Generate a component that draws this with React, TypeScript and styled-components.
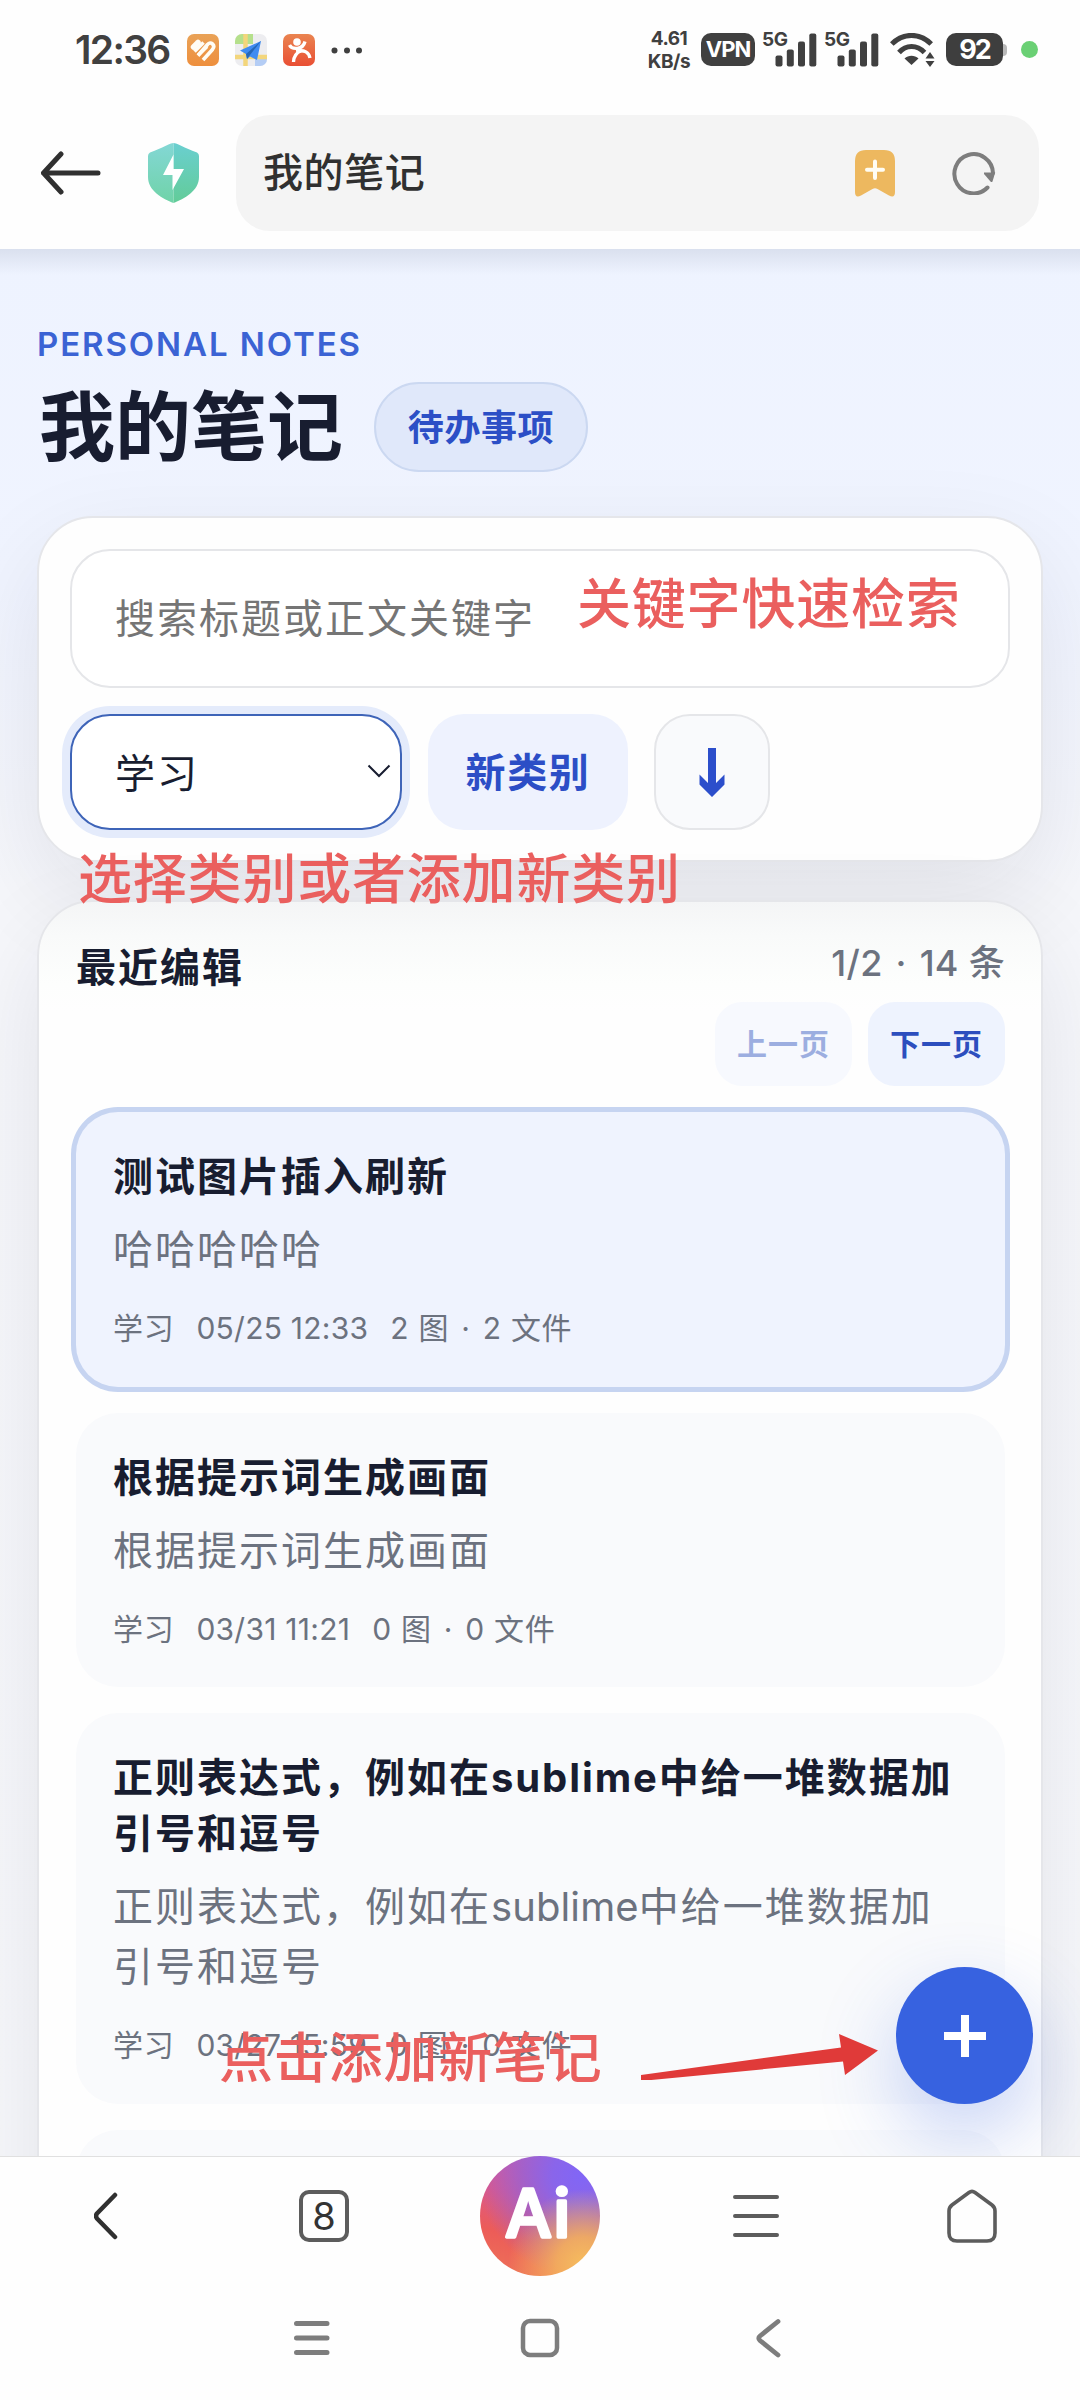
import React from "react";
import styled, { createGlobalStyle, css } from "styled-components";

const sans = `Inter, "Noto Sans CJK SC", sans-serif`;

const GlobalStyle = createGlobalStyle`
  * { box-sizing: border-box; }
  body { margin: 0; background: #fff; font-family: ${sans}; }
  button, input { font-family: inherit; margin: 0; }
  svg { display: block; flex: none; }
`;

const Screen = styled.div`
  position: relative;
  width: 1080px;
  height: 2400px;
  display: flex;
  flex-direction: column;
  overflow: hidden;
  background: #fefefe;
`;

/* ---------- status bar ---------- */

const StatusBar = styled.div`
  height: 99px;
  flex: none;
  display: flex;
  align-items: center;
  padding: 0 42px 0 75px;
  color: #404040;
`;

const Clock = styled.span`
  width: 112px;
  font-size: 39px;
  line-height: 48px;
  font-weight: 600;
  letter-spacing: -1.7px;
  white-space: nowrap;
`;

const AppIcons = styled.div`
  display: flex;
  gap: 16px;
  align-items: center;
`;

const StatusRight = styled.div`
  margin-left: auto;
  display: flex;
  align-items: center;
`;

const NetSpeed = styled.div`
  width: 44px;
  margin-right: 10px;
  text-align: center;
  font-size: 19px;
  line-height: 23px;
  font-weight: 700;
  letter-spacing: -0.5px;
  white-space: nowrap;
`;

const VpnBadge = styled.div`
  width: 54px;
  height: 33px;
  margin-right: 7px;
  border-radius: 10px;
  background: #404040;
  color: #fff;
  font-size: 22px;
  line-height: 33px;
  font-weight: 700;
  letter-spacing: -1px;
  text-align: center;
`;

const Signal = styled.div`
  position: relative;
  width: 55px;
  height: 36px;
  margin-right: 7px;
`;

const SignalLabel = styled.span`
  position: absolute;
  left: 0;
  top: -2px;
  font-size: 19px;
  line-height: 19px;
  font-weight: 700;
  letter-spacing: -0.3px;
`;

const WifiSlot = styled.div`
  margin-left: 4px;
`;

const Battery = styled.div`
  display: flex;
  align-items: center;
  margin-left: 11px;
  &::after {
    content: "";
    width: 4px;
    height: 12px;
    border-radius: 0 4px 4px 0;
    background: #b9b9b9;
  }
`;

const BatteryBody = styled.div`
  width: 57px;
  height: 33px;
  border-radius: 10px;
  background: #3e3e3e;
  color: #fff;
  font-size: 27px;
  line-height: 33px;
  font-weight: 700;
  letter-spacing: -2px;
  text-align: center;
`;

const PrivacyDot = styled.div`
  width: 17px;
  height: 17px;
  margin-left: 14px;
  border-radius: 50%;
  background: #6ad074;
`;

/* ---------- browser toolbar ---------- */

const Toolbar = styled.header`
  height: 150px;
  flex: none;
  display: flex;
  align-items: flex-start;
  padding: 16px 41px 0 40px;
`;

const ToolIcon = styled.div<{ $gap: number }>`
  height: 115px;
  display: flex;
  align-items: center;
  margin-right: ${(p) => p.$gap}px;
`;

const AddressBar = styled.div`
  flex: 1;
  height: 116px;
  display: flex;
  align-items: center;
  padding: 0 43px 0 27px;
  border-radius: 34px;
  background: #f4f4f4;
`;

const AddressText = styled.span`
  flex: 1;
  font-size: 40px;
  line-height: 60px;
  font-weight: 500;
  letter-spacing: 0.6px;
  color: #303030;
`;

/* ---------- notes page ---------- */

const Page = styled.main`
  position: relative;
  flex: none;
  height: 1907px;
  overflow: hidden;
  padding: 75px 37px 0;
  background: linear-gradient(180deg, #eef3ff 0, #f0f4ff 330px, #f6f7fb 640px, #f7f8fb 100%);
  &::before {
    content: "";
    position: absolute;
    inset: 0 0 auto;
    height: 26px;
    background: linear-gradient(180deg, rgba(190, 198, 215, 0.42), rgba(190, 198, 215, 0));
  }
`;

const Eyebrow = styled.div`
  font-size: 33px;
  line-height: 40px;
  font-weight: 600;
  letter-spacing: 1.9px;
  color: #3b63d4;
  white-space: nowrap;
`;

const TitleRow = styled.div`
  display: flex;
  align-items: center;
  gap: 34px;
  height: 90px;
  margin: 18px 0 44px;
`;

const Title = styled.h1`
  margin: 0;
  padding-left: 2px;
  font-size: 76px;
  line-height: 90px;
  font-weight: 700;
  color: #181d30;
  width: 303px;
  white-space: nowrap;
`;

const TodoPill = styled.button`
  height: 90px;
  width: 214px;
  padding: 0 0 5px;
  border: 2px solid #cbd8f1;
  border-radius: 45px;
  background: #e0e8fa;
  color: #2c4fc6;
  font-size: 36px;
  font-weight: 700;
  letter-spacing: 0.6px;
  white-space: nowrap;
`;

const cardBox = css`
  border: 2px solid #e5e6ea;
  border-radius: 56px;
  box-shadow: 0 36px 100px rgba(20, 22, 40, 0.09);
`;

const FilterCard = styled.section`
  ${cardBox}
  height: 346px;
  padding: 31px 31px 30px;
  background: #fefefe;
  display: flex;
  flex-direction: column;
  gap: 26px;
`;

const SearchInput = styled.input`
  height: 139px;
  width: 940px;
  flex: none;
  padding: 0 0 0 43px;
  border: 2px solid #e5e6e9;
  border-radius: 40px;
  background: #fff;
  font-size: 40px;
  letter-spacing: 2px;
  &::placeholder { color: #757575; opacity: 1; }
`;

const FilterRow = styled.div`
  display: flex;
  flex: none;
  height: 116px;
`;

const CategorySelect = styled.div`
  width: 332px;
  padding: 0 9px 3px 43px;
  display: flex;
  align-items: center;
  justify-content: space-between;
  border: 2px solid #3e64b8;
  border-radius: 40px;
  background: #fff;
  box-shadow: 0 0 0 8px #e4ebfb;
  font-size: 40px;
  letter-spacing: 2px;
  color: #181d30;
`;

const NewCategory = styled.button`
  width: 200px;
  margin-left: 26px;
  padding: 0 0 4px;
  border: 0;
  border-radius: 36px;
  background: #eef2fe;
  color: #2c4ec6;
  font-size: 40px;
  font-weight: 700;
  letter-spacing: 1.6px;
`;

const SortButton = styled.button`
  width: 116px;
  margin-left: 26px;
  padding: 0;
  display: flex;
  align-items: center;
  justify-content: center;
  border: 2px solid #e5e6e9;
  border-radius: 36px;
  background: #f9fafc;
`;

const NotesCard = styled.section`
  ${cardBox}
  margin-top: 38px;
  height: 1400px;
  padding: 36px 36px 0 37px;
  background: linear-gradient(180deg, #f4f5f6 0, #f9fafa 34px, #fdfefd 82px, #fefefe 110px);
`;

const ListHead = styled.div`
  display: flex;
  justify-content: space-between;
  height: 174px;
`;

const ListTitle = styled.h2`
  margin: 0;
  font-size: 40px;
  line-height: 60px;
  font-weight: 700;
  letter-spacing: 2px;
  color: #181d30;
`;

const Pager = styled.div`
  display: flex;
  flex-direction: column;
  align-items: flex-end;
`;

const PageInfo = styled.div`
  height: 64px;
  font-size: 36px;
  line-height: 51px;
  font-weight: 500;
  letter-spacing: 0.3px;
  color: #6c727f;
  white-space: nowrap;
`;

const MidDot = styled.span`
  margin: 0 3px;
`;

const PagerButtons = styled.div`
  display: flex;
  gap: 16px;
`;

const PagerButton = styled.button<{ $off?: boolean }>`
  width: 137px;
  height: 84px;
  padding: 0 0 4px;
  border: 0;
  border-radius: 27px;
  background: ${(p) => (p.$off ? "#f7f9fe" : "#eef3fe")};
  color: ${(p) => (p.$off ? "#9caee0" : "#2c4ebe")};
  font-size: 30px;
  font-weight: 700;
  letter-spacing: 1px;
`;

const NoteList = styled.div`
  display: flex;
  flex-direction: column;
  gap: 26px;
`;

const NoteItem = styled.article<{ $active?: boolean }>`
  min-height: 274px;
  padding: 37px 36px 35.7px 37px;
  border-radius: 42px;
  background: ${(p) => (p.$active ? "#eff3fe" : "#f9fafc")};
  box-shadow: ${(p) => (p.$active ? "0 0 0 5px #c6d4f1" : "none")};
`;

const NoteTitle = styled.h3`
  margin: 0;
  font-size: 40px;
  line-height: 56px;
  font-weight: 700;
  letter-spacing: 2px;
  color: #181d30;
`;

const NoteBody = styled.p`
  margin: 15px 0 0;
  font-size: 40px;
  line-height: 60px;
  letter-spacing: 2px;
  color: #6c727f;
`;

const Latin = styled.span<{ $ls: number }>`
  letter-spacing: ${(p) => p.$ls}px;
`;

const NoteMeta = styled.div`
  display: flex;
  gap: 22px;
  height: 45px;
  margin-top: 26px;
  font-size: 30px;
  line-height: 45px;
  letter-spacing: 0.7px;
  color: #6c727f;
  white-space: nowrap;
`;

const MetaTime = styled.span`
  letter-spacing: 0.25px;
`;

const AddButton = styled.button`
  position: absolute;
  left: 896px;
  top: 1718px;
  width: 137px;
  height: 137px;
  padding: 0;
  display: flex;
  align-items: center;
  justify-content: center;
  border: 0;
  border-radius: 50%;
  background: #3762e0;
  box-shadow: 0 32px 80px rgba(55, 98, 224, 0.28);
`;

const Annotation = styled.div<{ $x: number; $y: number }>`
  position: absolute;
  left: ${(p) => p.$x}px;
  top: ${(p) => p.$y}px;
  font-size: 54px;
  line-height: 64px;
  font-weight: 500;
  letter-spacing: 0.8px;
  color: #ea5f5e;
  white-space: nowrap;
`;

const AnnotationArrow = styled.svg`
  position: absolute;
  left: 636px;
  top: 2030px;
`;

/* ---------- bottom bars ---------- */

const BottomNav = styled.nav`
  height: 120px;
  flex: none;
  display: grid;
  grid-template-columns: repeat(5, 216px);
  grid-template-rows: 118px;
  justify-items: center;
  align-items: center;
  border-top: 1px solid #e0e0e0;
  background: #fefefe;
`;

const TabCount = styled.div`
  width: 50px;
  height: 52px;
  border: 4px solid #5c5c5c;
  border-radius: 10px;
  font-size: 38px;
  line-height: 44px;
  text-align: center;
  color: #333;
`;

const AiButton = styled.div`
  width: 120px;
  height: 120px;
  border-radius: 50%;
  display: flex;
  align-items: center;
  justify-content: center;
  background:
    radial-gradient(circle at 86% 90%, #f6bd5e 0, rgba(244, 176, 92, 0.9) 18%, rgba(240, 150, 90, 0) 50%),
    radial-gradient(circle at 84% 16%, #8166f6 0, #8a65ea 20%, rgba(150, 98, 214, 0.75) 42%, rgba(190, 92, 170, 0) 72%),
    linear-gradient(195deg, #cc5cae 8%, #dc588a 40%, #ec5c58 68%, #ee7458 100%);
`;

const SystemNav = styled.nav`
  flex: 1;
  display: flex;
  justify-content: center;
  align-items: flex-start;
  padding-top: 41px;
  background: #fefefe;
`;

const SystemKey = styled.div`
  width: 228px;
  display: flex;
  justify-content: center;
`;

/* ---------- drawings ---------- */

const HeartApp = () => (
  <svg width="32" height="32" viewBox="0 0 32 32">
    <defs>
      <linearGradient id="heart" x1="0" y1="0" x2="0" y2="1">
        <stop offset="0" stopColor="#e9a257" />
        <stop offset="1" stopColor="#ee8f3d" />
      </linearGradient>
    </defs>
    <rect width="32" height="32" rx="7" fill="url(#heart)" />
    <g fill="none" stroke="#fffdf5" strokeWidth="3.600">
      <path d="M6.500 13 L11 8.500" strokeWidth="5.500" strokeLinecap="round" />
      <path d="M7.500 17.500 L16.500 8.500" />
      <path d="M11 21.500 L20 12.500" />
      <path d="M11 21.500 L20.500 10.500 C23.500 6.500 29 11 25.500 15.500 L16 26" />
    </g>
  </svg>
);

const MapApp = () => (
  <svg width="32" height="32" viewBox="0 0 32 32">
    <defs>
      <clipPath id="mapclip">
        <rect width="32" height="32" rx="7" />
      </clipPath>
    </defs>
    <g clipPath="url(#mapclip)">
      <rect width="32" height="32" fill="#ededf0" />
      <rect width="18" height="10" fill="#b5e08c" />
      <rect x="20" y="25" width="12" height="7" fill="#b4cdf5" />
      <path d="M10.500 0V32M0 23H32" stroke="#f3d67c" strokeWidth="4.500" />
      <path d="M26 7 L5 16.500 L11 20 L12 25 L15 22.500 L22 26 Z" fill="#3f8cf0" />
      <path d="M26 7 L11 20 L12 25 L15 21 Z" fill="#2567b8" />
    </g>
  </svg>
);

const RunnerApp = () => (
  <svg width="32" height="32" viewBox="0 0 32 32">
    <defs>
      <linearGradient id="runner" x1="0" y1="0" x2="0" y2="1">
        <stop offset="0" stopColor="#ea8450" />
        <stop offset="1" stopColor="#e94f34" />
      </linearGradient>
    </defs>
    <rect width="32" height="32" rx="7" fill="url(#runner)" />
    <circle cx="14" cy="8" r="3.800" fill="#fff" />
    <g fill="none" stroke="#fff" strokeWidth="3.300" strokeLinecap="butt">
      <path d="M6.500 11 C9 16 20 16 22 7.500" />
      <path d="M10.500 28 C10.500 22 14 18.500 18.500 16" />
      <path d="M15 17 C21 16 26 18 27 24" />
      <path d="M15 14 L16 19" strokeWidth="5" />
    </g>
  </svg>
);

const Dots = () => (
  <svg width="32" height="32" viewBox="0 0 32 32">
    <g fill="#404040">
      <circle cx="3.500" cy="16.500" r="3" />
      <circle cx="16" cy="16.500" r="3" />
      <circle cx="28" cy="16.500" r="3" />
    </g>
  </svg>
);

const CellSignal = () => (
  <Signal>
    <SignalLabel>5G</SignalLabel>
    <svg width="55" height="36" viewBox="0 0 55 36">
      <g fill="#404040">
        <rect x="13.500" y="23.500" width="7" height="11" rx="2" />
        <rect x="24.800" y="17.500" width="7" height="17" rx="2" />
        <rect x="36" y="9.500" width="7" height="25" rx="2" />
        <rect x="47.300" y="1.500" width="7" height="33" rx="2" />
      </g>
    </svg>
  </Signal>
);

const Wifi = () => (
  <svg width="45" height="34" viewBox="0 0 45 34">
    <g fill="none" stroke="#404040" strokeWidth="5">
      <path d="M1.800 11 C13 -0.500 30 -0.500 41.200 11" />
      <path d="M9 19.500 C16 11.500 27 11.500 34.500 19.500" />
    </g>
    <path d="M14.500 25.500 C18.500 21.800 24.500 21.800 28.500 25.500 L21.500 32 Z" fill="#404040" />
    <path d="M35.500 25.500 L40 19 L44.500 25.500 Z M35.500 28 L40 34 L44.500 28 Z" fill="#404040" />
  </svg>
);

const BackArrow = () => (
  <svg width="61" height="44" viewBox="0 0 61 44">
    <path d="M21 3 L3.500 22 L21 41 M3.500 22 H58" fill="none" stroke="#303030" strokeWidth="5" strokeLinecap="round" strokeLinejoin="round" />
  </svg>
);

const Shield = () => (
  <svg width="51" height="60" viewBox="0 0 51 60">
    <defs>
      <linearGradient id="sl" x1="0" y1="0" x2="0" y2="1">
        <stop offset="0" stopColor="#83d7d5" />
        <stop offset="1" stopColor="#70d3a8" />
      </linearGradient>
      <linearGradient id="sr" x1="0" y1="0" x2="0" y2="1">
        <stop offset="0" stopColor="#6acfd0" />
        <stop offset="1" stopColor="#62cc98" />
      </linearGradient>
    </defs>
    <path d="M25.500 0 C22 0 15 5 2 9.500 Q0 10.500 0 13 V34 C0 48 15 56 25.500 60 Z" fill="url(#sl)" />
    <path d="M25.500 0 C29 0 36 5 49 9.500 Q51 10.500 51 13 V34 C51 48 36 56 25.500 60 Z" fill="url(#sr)" />
    <path d="M25.500 11.500 L15 32 H24.500 V47 L36 26 H25.500 Z" fill="#fff" />
  </svg>
);

const Bookmark = () => (
  <svg width="40" height="47" viewBox="0 0 40 47">
    <path d="M0 11 Q0 0 11 0 H29 Q40 0 40 11 V42 Q40 48.500 34 45.500 L22.500 39 Q20 37.500 17.500 39 L6 45.500 Q0 48.500 0 42 Z" fill="#edb85f" />
    <path d="M20 11.500 V28 M12 19.800 H28" stroke="#fffdf3" strokeWidth="4" strokeLinecap="round" />
  </svg>
);

const Refresh = () => (
  <svg width="44" height="44" viewBox="0 0 44 44">
    <path d="M35.500 36.500 A19.300 19.600 0 1 1 41 22" fill="none" stroke="#7d7d7d" strokeWidth="4" strokeLinecap="round" />
    <path d="M32 21.500 H43.200 L40.500 30.500 Q39.500 31.500 38.500 30.500 L32 23 Z" fill="#7d7d7d" />
  </svg>
);

type Note = {
  title: React.ReactNode;
  body: React.ReactNode;
  time: string;
  images: number;
  files: number;
  active?: boolean;
};

const notes: Note[] = [
  { title: "测试图片插入刷新", body: "哈哈哈哈哈", time: "05/25 12:33", images: 2, files: 2, active: true },
  { title: "根据提示词生成画面", body: "根据提示词生成画面", time: "03/31 11:21", images: 0, files: 0 },
  {
    title: (<>正则表达式，例如在<Latin $ls={1.9}>sublime</Latin>中给一堆数据加引号和逗号</>),
    body: (<>正则表达式，例如在<Latin $ls={0.1}>sublime</Latin>中给一堆数据加引号和逗号</>),
    time: "03/27 15:59",
    images: 0,
    files: 0,
  },
];

export default function App() {
  return (
    <Screen>
      <GlobalStyle />
      <StatusBar>
        <Clock>12:36</Clock>
        <AppIcons>
          <HeartApp />
          <MapApp />
          <RunnerApp />
          <Dots />
        </AppIcons>
        <StatusRight>
          <NetSpeed>4.61<br />KB/s</NetSpeed>
          <VpnBadge>VPN</VpnBadge>
          <CellSignal />
          <CellSignal />
          <WifiSlot><Wifi /></WifiSlot>
          <Battery><BatteryBody>92</BatteryBody></Battery>
          <PrivacyDot />
        </StatusRight>
      </StatusBar>

      <Toolbar>
        <ToolIcon $gap={47}><BackArrow /></ToolIcon>
        <ToolIcon $gap={37}><Shield /></ToolIcon>
        <AddressBar>
          <AddressText>我的笔记</AddressText>
          <ToolIcon $gap={57}><Bookmark /></ToolIcon>
          <Refresh />
        </AddressBar>
      </Toolbar>

      <Page>
        <Eyebrow>PERSONAL NOTES</Eyebrow>
        <TitleRow>
          <Title>我的笔记</Title>
          <TodoPill>待办事项</TodoPill>
        </TitleRow>

        <FilterCard>
          <SearchInput placeholder="搜索标题或正文关键字" />
          <FilterRow>
            <CategorySelect>
              学习
              <svg width="24" height="14" viewBox="0 0 24 14">
                <path d="M1.500 1.500 L12 12 L22.500 1.500" fill="none" stroke="#181d30" strokeWidth="2" />
              </svg>
            </CategorySelect>
            <NewCategory>新类别</NewCategory>
            <SortButton>
              <svg width="26" height="50" viewBox="0 0 26 50">
                <path d="M9 1 H17 V36 L25.500 27.500 V37.500 L13 50 L0.500 37.500 V27.500 L9 36 Z" fill="#2c4ecb" />
              </svg>
            </SortButton>
          </FilterRow>
        </FilterCard>

        <NotesCard>
          <ListHead>
            <ListTitle>最近编辑</ListTitle>
            <Pager>
              <PageInfo>1/2 <MidDot>·</MidDot> 14 条</PageInfo>
              <PagerButtons>
                <PagerButton $off>上一页</PagerButton>
                <PagerButton>下一页</PagerButton>
              </PagerButtons>
            </Pager>
          </ListHead>
          <NoteList>
            {notes.map((n) => (
              <NoteItem key={n.time} $active={n.active}>
                <NoteTitle>{n.title}</NoteTitle>
                <NoteBody>{n.body}</NoteBody>
                <NoteMeta>
                  <span>学习</span>
                  <MetaTime>{n.time}</MetaTime>
                  <span>{n.images} 图 <MidDot>·</MidDot> {n.files} 文件</span>
                </NoteMeta>
              </NoteItem>
            ))}
            <NoteItem />
          </NoteList>
        </NotesCard>

        <AddButton>
          <svg width="42" height="42" viewBox="0 0 42 42">
            <path d="M21 0 V42 M0 21 H42" stroke="#fff" strokeWidth="8" />
          </svg>
        </AddButton>
      </Page>

      <BottomNav>
        <svg width="28" height="50" viewBox="0 0 28 50">
          <path d="M23 4 L5 22.500 Q3 25 5 27.500 L23 46" transform="translate(-2 0)" fill="none" stroke="#303030" strokeWidth="4.500" strokeLinecap="round" />
        </svg>
        <TabCount>8</TabCount>
        <AiButton>
          <svg width="120" height="120" viewBox="0 0 120 120">
            <text x="25" y="81" fontFamily={sans} fontSize="66" fontWeight="500" letterSpacing="1.5" fill="#fff" stroke="#fff" strokeWidth="3.400" strokeLinejoin="round">Ai</text>
          </svg>
        </AiButton>
        <svg width="46" height="44" viewBox="0 0 46 44">
          <path d="M2 3 H44 M2 22 H44 M2 41 H44" stroke="#5c5c5c" strokeWidth="4" strokeLinecap="round" />
        </svg>
        <svg width="50" height="54" viewBox="0 0 50 54">
          <path d="M22 3.500 Q25 1.200 28 3.500 L45 16 Q48 18.500 48 22 V44 Q48 52 40 52 H10 Q2 52 2 44 V22 Q2 18.500 5 16 Z" fill="none" stroke="#5c5c5c" strokeWidth="3.600" />
        </svg>
      </BottomNav>

      <SystemNav>
        <SystemKey>
          <svg width="38" height="42" viewBox="0 0 38 42">
            <path d="M3.500 6.500 H34 M3.500 21 H34 M3.500 35.500 H34" stroke="#7d7d7d" strokeWidth="5" strokeLinecap="round" />
          </svg>
        </SystemKey>
        <SystemKey>
          <svg width="42" height="42" viewBox="0 0 42 42">
            <rect x="4" y="4" width="34" height="34" rx="7" fill="none" stroke="#7d7d7d" strokeWidth="4.500" />
          </svg>
        </SystemKey>
        <SystemKey>
          <svg width="28" height="42" viewBox="0 0 28 42">
            <path d="M24 4.500 L6 19 Q3.500 21 6 23.500 L24 38" fill="none" stroke="#7d7d7d" strokeWidth="4.800" strokeLinecap="round" />
          </svg>
        </SystemKey>
      </SystemNav>

      <Annotation $x={577} $y={573}>关键字快速检索</Annotation>
      <Annotation $x={78} $y={848}>选择类别或者添加新类别</Annotation>
      <Annotation $x={219} $y={2027}>点击添加新笔记</Annotation>
      <AnnotationArrow width="248" height="50" viewBox="636 2030 248 50">
        <path d="M641 2075 L841 2047.500 L839 2034 L878 2050.500 L845 2075 L843 2061.500 L641 2081 Z" fill="#e03a39" />
      </AnnotationArrow>
    </Screen>
  );
}
